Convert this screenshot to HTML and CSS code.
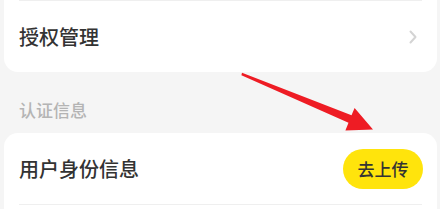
FILE: index.html
```html
<!DOCTYPE html>
<html lang="zh-CN">
<head>
    <meta charset="UTF-8">
    <meta name="viewport" content="width=device-width, initial-scale=1.0">
    <title>账号设置</title>
    <link rel="stylesheet" href="styles.css">
</head>
<body>
    <div class="page">
        <div class="card card-top">
            <div class="divider"></div>
            <div class="row">
                <span class="row-title">授权管理</span>
                <svg class="chevron" width="8" height="14" viewBox="0 0 8 14">
                    <path d="M1.5 1.5 L6.5 7 L1.5 12.5" fill="none" stroke="#d4d4d4" stroke-width="2" stroke-linecap="round" stroke-linejoin="round"/>
                </svg>
            </div>
        </div>

        <div class="section-label">认证信息</div>

        <div class="card card-bottom">
            <div class="row">
                <span class="row-title">用户身份信息</span>
                <button class="upload-btn">去上传</button>
            </div>
            <div class="divider"></div>
        </div>

        <!-- 标注箭头 -->
        <svg class="arrow" width="440" height="209" viewBox="0 0 440 209">
            <polygon points="242,72.8 351.5,115.3 354.6,108 373,129.5 345.4,130.5 348.5,122.7 241.4,75.2" fill="#ee1c24"/>
        </svg>
    </div>
</body>
</html>
```

FILE: styles.css
```css
* {
    margin: 0;
    padding: 0;
    box-sizing: border-box;
}

body {
    font-family: "Noto Sans CJK SC", "Noto Sans", sans-serif;
    background-color: #f5f5f5;
    color: #333;
}

.page {
    position: relative;
    padding: 0 3px 0 4px;
    height: 209px;
    overflow: hidden;
}

.card {
    background-color: #fff;
}

.card-top {
    border-radius: 0 0 14px 14px;
}

.card-bottom {
    border-radius: 14px 14px 0 0;
    padding-bottom: 4px;
}

.divider {
    height: 1px;
    margin: 0 15px;
    background-color: #efefef;
}

.row {
    height: 71px;
    display: flex;
    align-items: center;
    justify-content: space-between;
    padding: 0 14px 0 15px;
}

.row-title {
    font-size: 20px;
    font-weight: 500;
    line-height: 1;
}

.chevron {
    margin-right: 6px;
}

.section-label {
    padding: 27px 15px 12px;
    font-size: 17px;
    font-weight: 500;
    line-height: 22px;
    color: #b4b4b4;
}

.upload-btn {
    width: 80px;
    height: 40px;
    border: none;
    border-radius: 20px;
    background-color: #ffe40c;
    color: #333;
    font-family: inherit;
    font-size: 17px;
    font-weight: 500;
    line-height: 1;
}

.arrow {
    position: absolute;
    left: 0;
    top: 0;
    pointer-events: none;
}
```
